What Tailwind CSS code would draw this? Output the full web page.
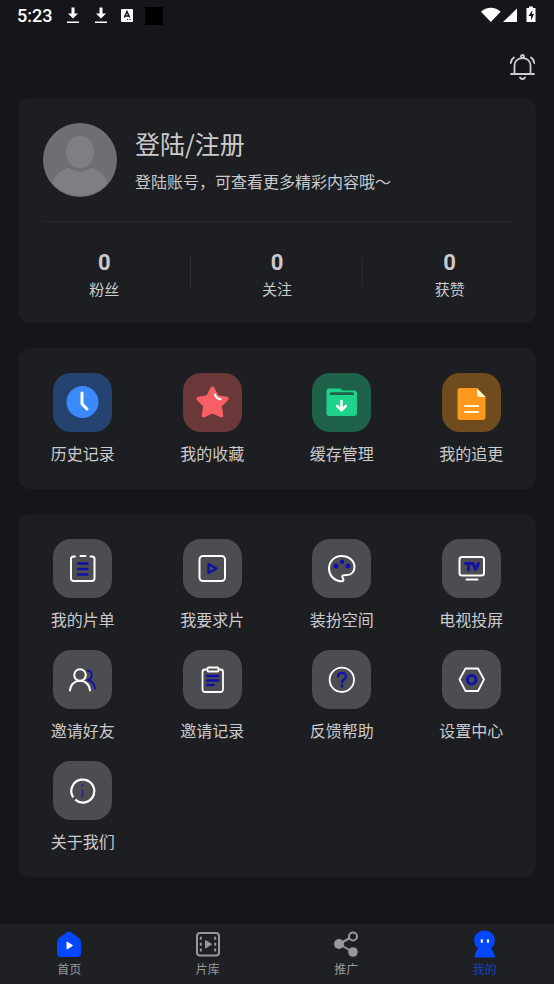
<!DOCTYPE html>
<html lang="zh-CN">
<head>
<meta charset="utf-8">
<meta name="viewport" content="width=device-width, initial-scale=1">
<title>我的</title>
<script src="https://cdn.jsdelivr.net/npm/@tailwindcss/browser@4"></script>
</head>
<body class="flex min-h-screen flex-col bg-[#15161a] font-['Noto_Sans_CJK_SC',sans-serif] text-[#cbcbcd]">

<!-- Status bar -->
<div class="flex h-8 items-center justify-between px-[17px] text-white">
  <div class="flex items-center gap-3">
    <span class="w-9 font-[Roboto,sans-serif] text-lg font-medium leading-8">5:23</span>
    <svg class="h-5 w-4" viewBox="0 0 16 20" fill="#fff"><path d="M6.500 1.500h3v6H13L8 12.500 3 7.500h3.500zM2 15.500h12V17H2z"/></svg>
    <svg class="h-5 w-4" viewBox="0 0 16 20" fill="#fff"><path d="M6.500 1.500h3v6H13L8 12.500 3 7.500h3.500zM2 15.500h12V17H2z"/></svg>
    <svg class="h-5 w-3" viewBox="0 0 12 20"><rect y="3" width="12" height="13" rx="1" fill="#fff"/><path d="M3.300 11.500 6 5.500l2.700 6M4.300 10h3.400" fill="none" stroke="#15161a" stroke-width="1.500"/><path d="M6 13.500h1.300M8.500 13.500h1.300" stroke="#15161a"/></svg>
    <span class="h-[18px] w-[18px] bg-black"></span>
  </div>
  <svg class="h-5 w-14" viewBox="0 0 56 20" fill="#fff"><path d="M-1 5C4.500-.5 13.500-.5 19 5L9 16z" transform="translate(1 1) scale(.98 .94)"/><path d="M36 2.500V16H22z"/><path fill-rule="evenodd" d="M48 .5h4V2h2.500v14h-9V2H48zM51.500 4 47.500 10H50v4.500l3-6.500h-2z"/></svg>
</div>

<header class="flex justify-end px-[18px] pt-5 pb-[18px]">
  <button type="button" aria-label="消息通知" class="h-7 w-7">
    <svg class="h-7 w-7" viewBox="0 0 28 28" fill="none" stroke="#cecece" stroke-width="1.800" stroke-linecap="round"><circle cx="14.500" cy="4.500" r="1.500"/><path d="M3 22h23M6.500 21.500v-8c0-4.500 3.500-7.300 8-7.300s8 2.800 8 7.300v8M12 25.500c1 2 4 2 5 0M2.800 11c.2-2.500 1.300-4.300 3.200-5.500M26.200 11c-.2-2.500-1.300-4.300-3.200-5.500"/></svg>
  </button>
</header>

<main class="flex flex-1 flex-col gap-[25px] px-[18px]">
  <!-- Account -->
  <section class="rounded-xl bg-[#1d1e22]">
    <button type="button" class="flex w-full items-center gap-[18px] px-[25px] pt-[25px] pb-6 text-left">
      <svg class="h-[74px] w-[74px] shrink-0" viewBox="0 0 74 74"><defs><clipPath id="avatar"><circle cx="37" cy="37" r="36"/></clipPath></defs><circle cx="37" cy="37" r="37" fill="#6e6f72"/><g fill="#7e7f82" clip-path="url(#avatar)"><ellipse cx="37" cy="29" rx="14" ry="16"/><path d="M9 62c2-9 8-15 17-17 7 5 15 5 22 0 9 2 15 8 17 17-6 7-17 12-28 12S15 69 9 62z"/></g></svg>
      <span class="flex flex-col gap-1 pt-[2px]">
        <span class="text-[25px] leading-9">登陆/注册</span>
        <span class="text-base leading-8">登陆账号，可查看更多精彩内容哦～</span>
      </span>
    </button>
    <hr class="mx-[25px] border-[#292a2e]">
    <div class="grid grid-cols-3 pt-[27px] pb-[22px] text-center">
      <div class="flex flex-col items-center"><span class="font-[Roboto,sans-serif] text-[22px] font-bold leading-7">0</span><span class="text-[15px] leading-6">粉丝</span></div>
      <div class="relative flex flex-col items-center"><span class="absolute top-2 -left-px h-[30px] w-px bg-[#303135]"></span><span class="font-[Roboto,sans-serif] text-[22px] font-bold leading-7">0</span><span class="text-[15px] leading-6">关注</span></div>
      <div class="relative flex flex-col items-center"><span class="absolute top-2 -left-px h-[30px] w-px bg-[#292a2e]"></span><span class="font-[Roboto,sans-serif] text-[22px] font-bold leading-7">0</span><span class="text-[15px] leading-6">获赞</span></div>
    </div>
  </section>

  <!-- Shortcuts -->
  <section class="grid grid-cols-4 rounded-xl bg-[#1d1e22] pt-[25px] pb-6">
    <button type="button" class="flex flex-col items-center gap-[9px]">
      <svg class="h-[59px] w-[59px] rounded-[18px] bg-[#254370]" viewBox="0 0 59 59"><circle cx="29.500" cy="29" r="16" fill="#3b89fb"/><path d="M29 20v11l5 5" fill="none" stroke="#fff" stroke-width="3" stroke-linecap="round" stroke-linejoin="round"/></svg>
      <span class="text-base leading-6">历史记录</span>
    </button>
    <button type="button" class="flex flex-col items-center gap-[9px]">
      <svg class="h-[59px] w-[59px] rounded-[18px] bg-[#6b383a]" viewBox="0 0 59 59"><path d="M29.500 15.500 34 24.200l9.700 1.500-6.900 7 1.500 9.800-8.800-4.300-8.800 4.300 1.500-9.800-6.900-7 9.700-1.500z" fill="#f66064" stroke="#f66064" stroke-width="4" stroke-linejoin="round"/><path d="M32 21.500c.7 2.500 2.300 4.300 5.500 4.700" fill="none" stroke="#fff" stroke-width="2.200" stroke-linecap="round"/></svg>
      <span class="text-base leading-6">我的收藏</span>
    </button>
    <button type="button" class="flex flex-col items-center gap-[9px]">
      <svg class="h-[59px] w-[59px] rounded-[18px] bg-[#1e6249]" viewBox="0 0 59 59"><path d="M17.500 15.500h11l2 2H42a3 3 0 0 1 3 3v19.500a3 3 0 0 1-3 3H17.500a3 3 0 0 1-3-3V18.500a3 3 0 0 1 3-3z" fill="#20d38c"/><path d="M17.500 22v-.8a2 2 0 0 1 2-2h20.500a2 2 0 0 1 2 2v.8z" fill="#1e6249"/><path d="M29.500 28v9M25.200 33l4.300 4.300 4.300-4.300" fill="none" stroke="#fff" stroke-width="2.500" stroke-linecap="round" stroke-linejoin="round"/></svg>
      <span class="text-base leading-6">缓存管理</span>
    </button>
    <button type="button" class="flex flex-col items-center gap-[9px]">
      <svg class="h-[59px] w-[59px] rounded-[18px] bg-[#704b1d]" viewBox="0 0 59 59"><path d="M18.500 15H35l8.500 8.500V44a3 3 0 0 1-3 3h-22a3 3 0 0 1-3-3V18a3 3 0 0 1 3-3z" fill="#ff981b"/><path d="M35 15.500V21a3 3 0 0 0 3 3h5.500z" fill="#fff5dd"/><path d="M23 33h13M23 39h13" stroke="#fff5dd" stroke-width="2.200" stroke-linecap="round"/></svg>
      <span class="text-base leading-6">我的追更</span>
    </button>
  </section>

  <!-- Services -->
  <section class="grid grid-cols-4 gap-y-[19px] rounded-xl bg-[#1d1e22] pt-[25px] pb-6">
    <button type="button" class="flex flex-col items-center gap-[9px]">
      <svg class="h-[59px] w-[59px] rounded-[18px] bg-[#4c4d50]" viewBox="0 0 59 59" fill="none" stroke="#fff" stroke-width="2" stroke-linecap="round"><path d="M22 17.500h-1.500a2.500 2.500 0 0 0-2.500 2.500v19.500a2.500 2.500 0 0 0 2.500 2.500H39a2.500 2.500 0 0 0 2.500-2.500V20a2.500 2.500 0 0 0-2.500-2.500h-1.500M27.500 17h5"/><path d="M25 24.500h9.500M25 30h9.500M25 35.500h9.500" stroke="#1010a8" stroke-width="2.300"/></svg>
      <span class="text-base leading-6">我的片单</span>
    </button>
    <button type="button" class="flex flex-col items-center gap-[9px]">
      <svg class="h-[59px] w-[59px] rounded-[18px] bg-[#4c4d50]" viewBox="0 0 59 59" fill="none" stroke="#fff" stroke-width="2" stroke-linejoin="round"><rect x="16.500" y="17" width="25.500" height="25" rx="3.500"/><path d="M25.500 25v9l8-4.500z" stroke="#1010a8" stroke-width="2.300"/></svg>
      <span class="text-base leading-6">我要求片</span>
    </button>
    <button type="button" class="flex flex-col items-center gap-[9px]">
      <svg class="h-[59px] w-[59px] rounded-[18px] bg-[#4c4d50]" viewBox="0 0 59 59" fill="none" stroke="#fff" stroke-width="2" stroke-linejoin="round"><path d="M29.500 17c7.500 0 13 4.800 13 11 0 5-3.500 8-7.500 8-3.500 0-5.500.2-4.500 2.500.8 1.800 1.500 2.200.8 3.200-.5.700-1.800.7-3 .5C21.500 41.500 17 36 17 29.500 17 22.500 22.500 17 29.500 17z"/><g fill="#1010a8" stroke="none"><circle cx="24" cy="27" r="2.500"/><circle cx="30" cy="22.800" r="2.300"/><circle cx="36" cy="27" r="2.500"/></g></svg>
      <span class="text-base leading-6">装扮空间</span>
    </button>
    <button type="button" class="flex flex-col items-center gap-[9px]">
      <svg class="h-[59px] w-[59px] rounded-[18px] bg-[#4c4d50]" viewBox="0 0 59 59" fill="none" stroke="#fff" stroke-width="2" stroke-linecap="round" stroke-linejoin="round"><rect x="17.500" y="18" width="24.500" height="18.500" rx="2.500"/><path d="M24.500 40.500h11"/><path d="M23.500 24.500h6M26.500 24.500v6.500M31 24.500l2.500 6 3-6" stroke="#1010a8" stroke-width="2.800"/></svg>
      <span class="text-base leading-6">电视投屏</span>
    </button>
    <button type="button" class="flex flex-col items-center gap-[9px]">
      <svg class="h-[59px] w-[59px] rounded-[18px] bg-[#4c4d50]" viewBox="0 0 59 59" fill="none" stroke="#fff" stroke-width="2" stroke-linecap="round"><path d="M34.500 20.500c5.500.5 5.500 9 0 9.500 4.500 1.200 7.200 4.500 7.500 8.500" stroke="#1010a8"/><circle cx="27" cy="25" r="5.800"/><path d="M17 40.500c.3-6 4.500-9.700 10-9.700s9.700 3.700 10 9.700"/></svg>
      <span class="text-base leading-6">邀请好友</span>
    </button>
    <button type="button" class="flex flex-col items-center gap-[9px]">
      <svg class="h-[59px] w-[59px] rounded-[18px] bg-[#4c4d50]" viewBox="0 0 59 59" fill="none" stroke="#fff" stroke-width="1.800" stroke-linecap="round"><path d="M24 19.500h-2a2.500 2.500 0 0 0-2.500 2.500v17.500A2.500 2.500 0 0 0 22 42h15.500a2.500 2.500 0 0 0 2.500-2.500V22a2.500 2.500 0 0 0-2.500-2.500h-2"/><rect x="24.500" y="17.500" width="11" height="4" rx="1"/><path d="M24 26h11.500M24 30.500h11.500M24 35h7" stroke="#1010a8" stroke-width="2.300"/></svg>
      <span class="text-base leading-6">邀请记录</span>
    </button>
    <button type="button" class="flex flex-col items-center gap-[9px]">
      <svg class="h-[59px] w-[59px] rounded-[18px] bg-[#4c4d50]" viewBox="0 0 59 59" fill="none" stroke="#fff" stroke-width="1.800" stroke-linecap="round"><circle cx="29.800" cy="29.800" r="12.200"/><path d="M26 26.500c0-5 8-4.800 8 0 0 3-4 3-4 6.300" stroke="#1010a8" stroke-width="2.300"/><circle cx="30" cy="36" r="1.500" fill="#1010a8" stroke="none"/></svg>
      <span class="text-base leading-6">反馈帮助</span>
    </button>
    <button type="button" class="flex flex-col items-center gap-[9px]">
      <svg class="h-[59px] w-[59px] rounded-[18px] bg-[#4c4d50]" viewBox="0 0 59 59" fill="none" stroke="#fff" stroke-width="1.800" stroke-linejoin="round"><path d="M23.500 18.500h12.500l6 11-6 11.500H23.500l-6-11.500z"/><circle cx="29.700" cy="29.700" r="4.300" stroke="#1010a8" stroke-width="3"/></svg>
      <span class="text-base leading-6">设置中心</span>
    </button>
    <button type="button" class="flex flex-col items-center gap-[9px]">
      <svg class="h-[59px] w-[59px] rounded-[18px] bg-[#4c4d50]" viewBox="0 0 59 59" fill="none" stroke="#fff" stroke-width="2.200"><path d="M22.200 38.700a11.500 11.500 0 1 0-2-2.300" stroke-linecap="butt"/><path d="M29.500 28.500V36" stroke="#322790"/><circle cx="29.500" cy="24.700" r="1.400" fill="#322790" stroke="none"/></svg>
      <span class="text-base leading-6">关于我们</span>
    </button>
  </section>
</main>

<!-- Tab bar -->
<nav class="mt-6 grid h-[60px] grid-cols-4 bg-[#1f2024] text-xs text-[#9b9c9e]">
  <a href="#home" class="flex flex-col items-center pt-1">
    <svg class="h-8 w-8" viewBox="0 0 32 32"><path d="M13.500 4.500a4 4 0 0 1 5 0l7 5A6 6 0 0 1 28 14v11a4 4 0 0 1-4 4H8a4 4 0 0 1-4-4V14a6 6 0 0 1 2.500-4.500z" fill="#0546ff"/><path d="M14 14v7l5.500-3.500z" fill="#fff" stroke="#fff" stroke-linejoin="round"/></svg>
    <span class="leading-[18px]">首页</span>
  </a>
  <a href="#library" class="flex flex-col items-center pt-1">
    <svg class="h-8 w-8" viewBox="0 0 32 32"><rect x="5" y="5" width="22" height="22.500" rx="3" fill="none" stroke="#97989a" stroke-width="2"/><path d="M13.500 12.500v7.500l6-3.800z" fill="#97989a" stroke="#97989a" stroke-linejoin="round"/><path d="M8.800 8.800v3M8.800 14.700v3M8.800 20.600v3M23.200 8.800v3M23.200 14.700v3M23.200 20.600v3" stroke="#97989a" stroke-width="2"/></svg>
    <span class="leading-[18px]">片库</span>
  </a>
  <a href="#promote" class="flex flex-col items-center pt-1">
    <svg class="h-8 w-8" viewBox="0 0 32 32"><path d="m9 16 14 8M9 16l11-6" stroke="#97989a" stroke-width="2"/><circle cx="9" cy="16" r="5" fill="#97989a"/><circle cx="23" cy="24" r="4.800" fill="#97989a"/><circle cx="23" cy="8.500" r="4" fill="none" stroke="#97989a" stroke-width="2"/></svg>
    <span class="leading-[18px]">推广</span>
  </a>
  <a href="#mine" aria-current="page" class="flex flex-col items-center pt-1 text-[#1042cf]">
    <svg class="h-8 w-8" viewBox="0 0 32 32"><path d="M15.500 2.500c6 0 10.300 4.200 10.300 10 0 3.500-1.500 6-3.800 8 2.200 2.500 3.700 5.500 4 9H5.500c.3-3.500 1.500-6.500 3.700-9-2.400-2-4-4.500-4-8 0-5.800 4.300-10 10.300-10z" fill="#0546ff"/><ellipse cx="12.800" cy="13" rx="1.200" ry="2" fill="#fff"/><ellipse cx="19" cy="13" rx="1.200" ry="2" fill="#fff"/></svg>
    <span class="leading-[18px]">我的</span>
  </a>
</nav>
</body>
</html>
